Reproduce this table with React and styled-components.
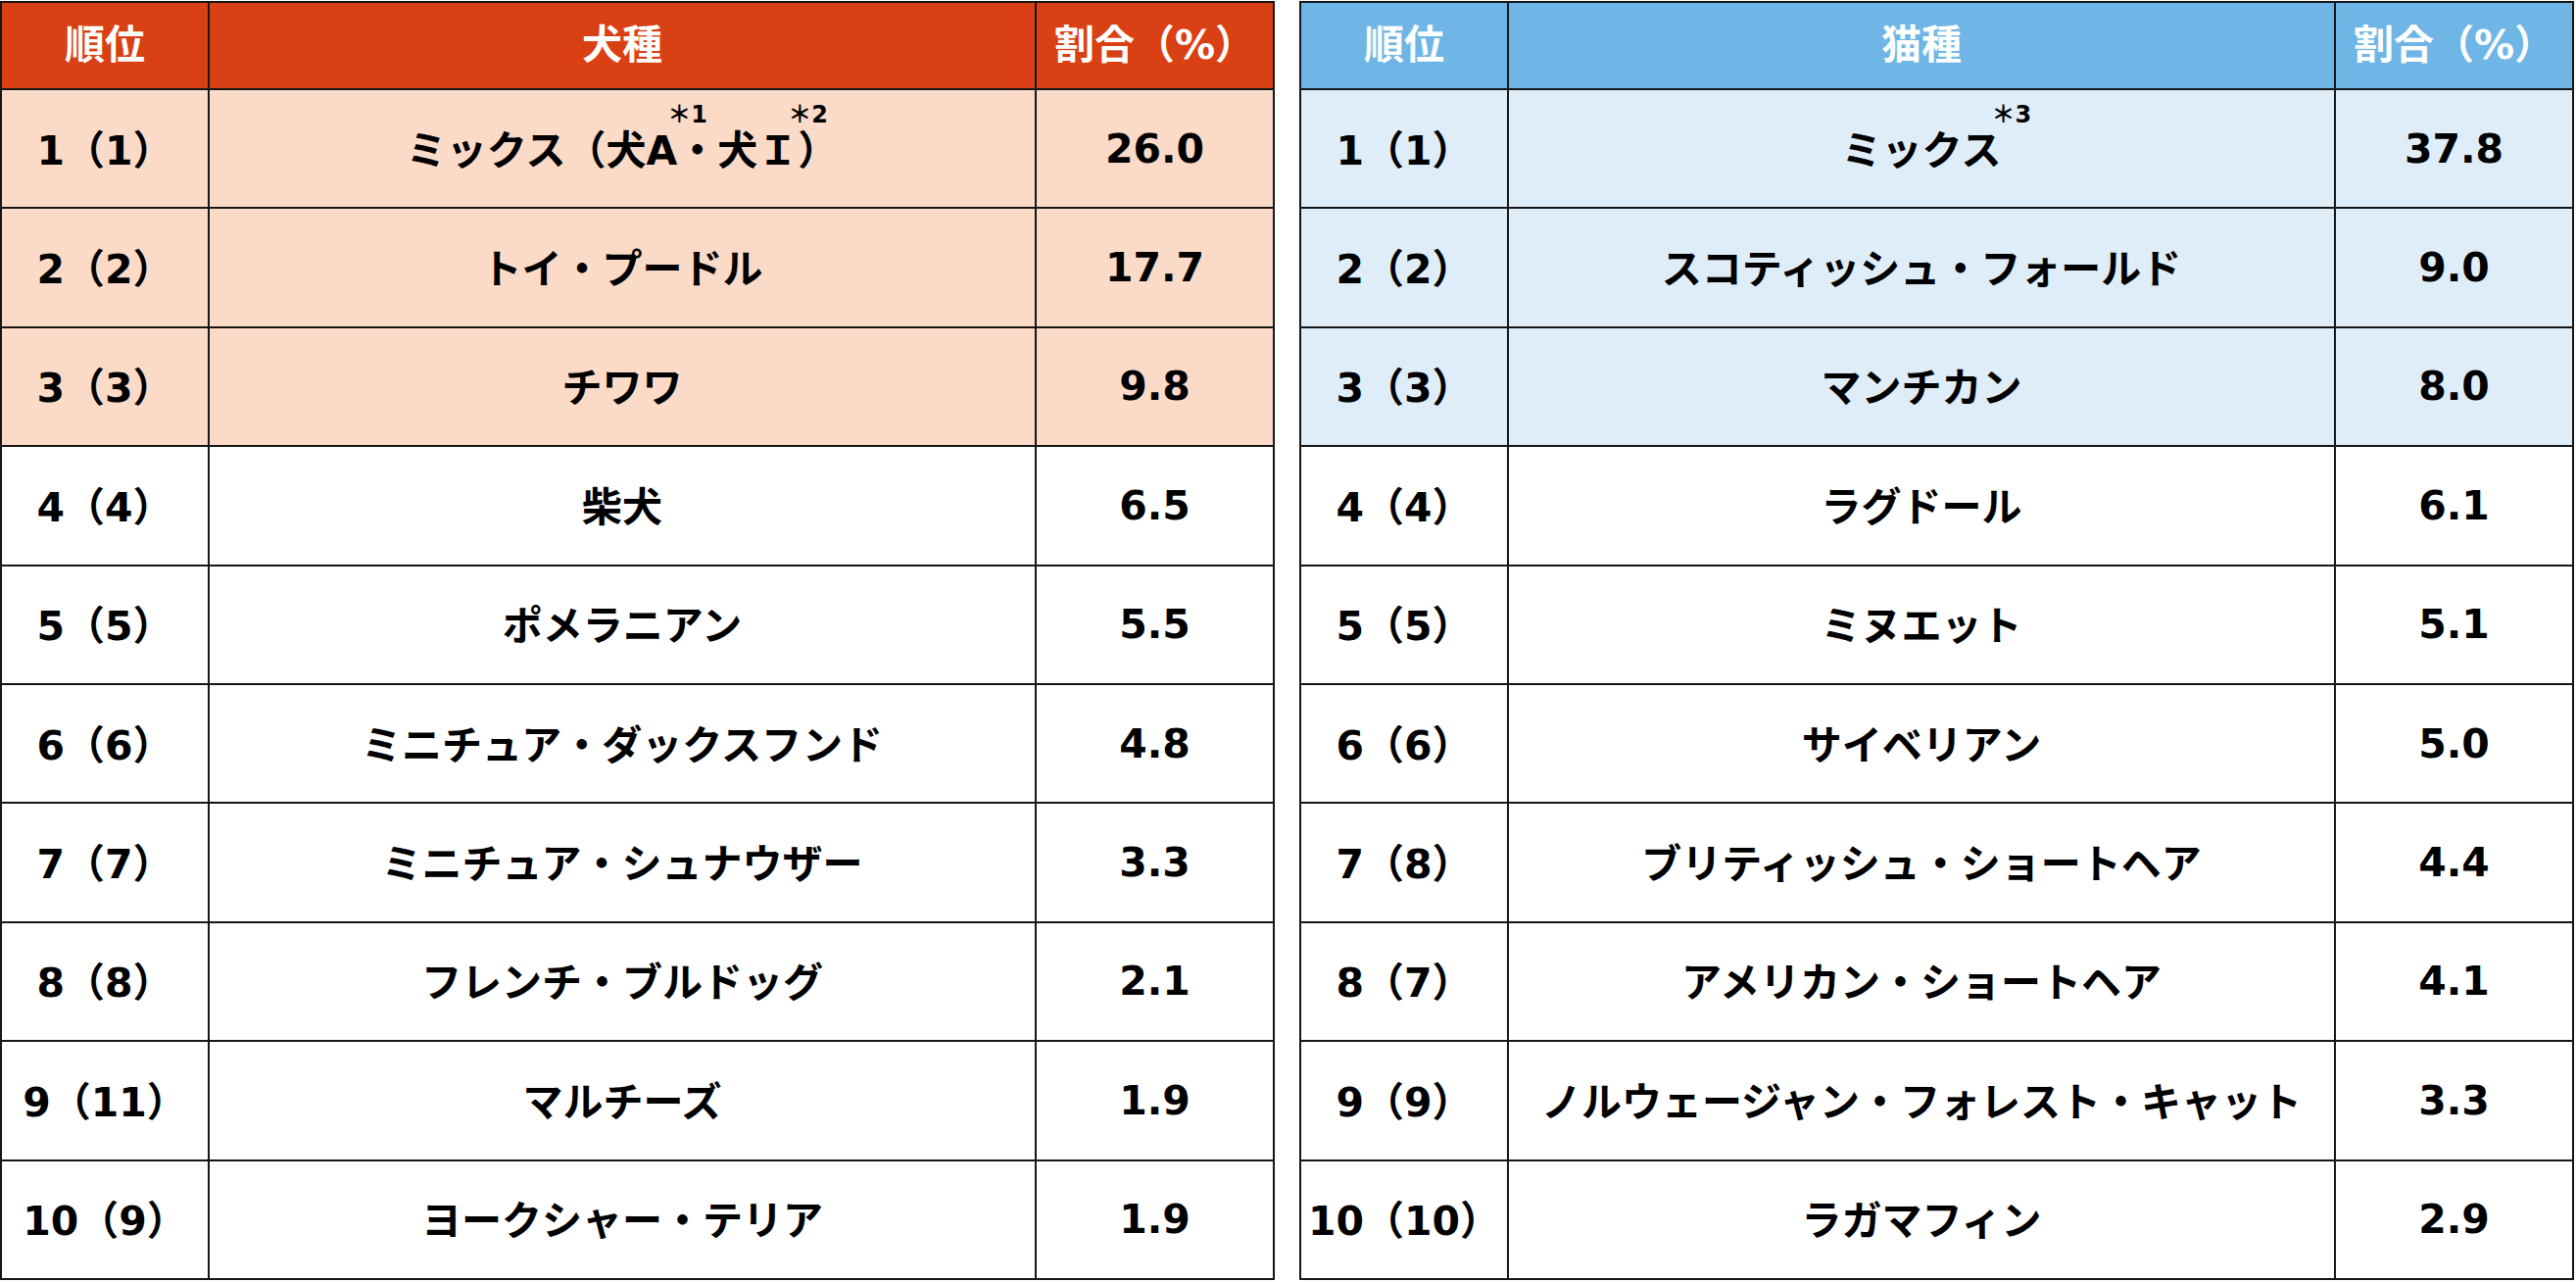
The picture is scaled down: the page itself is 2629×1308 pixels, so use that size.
import styled, { createGlobalStyle } from 'styled-components';

const GlobalStyle = createGlobalStyle`
  html, body {
    margin: 0;
    padding: 0;
    background: #fff;
  }
  body {
    font-family: "DejaVu Sans", "Noto Sans CJK JP", sans-serif;
  }
`;

const themes = {
  dog: { head: '#d94013', tint: '#fbdbc8' },
  cat: { head: '#6fb6e6', tint: '#dfedf9' },
};

const Page = styled.div`
  display: flex;
  gap: 25px;
  padding-top: 1px;
  width: 2629px;
  height: 1308px;
  box-sizing: border-box;
`;

const Table = styled.div`
  display: grid;
  grid-template-columns: 210px 1fr 241px;
  grid-template-rows: 87px repeat(10, 1fr);
  gap: 2px;
  padding: 2px;
  width: 1301px;
  height: 1305px;
  box-sizing: border-box;
  background: #161616;
`;

const HeadCell = styled.div`
  display: flex;
  align-items: center;
  justify-content: center;
  padding-bottom: 10px;
  background: ${(p) => p.$bg};
  color: #fff;
  font-size: 41px;
  font-weight: 700;
  white-space: nowrap;
`;

const Cell = styled.div`
  display: flex;
  align-items: center;
  justify-content: center;
  padding-bottom: ${(p) => (p.$num ? '0' : '4px')};
  background: ${(p) => p.$bg};
  color: #000;
  font-size: 41px;
  font-weight: 700;
  white-space: nowrap;
`;

const Note = styled.span`
  display: inline-block;
  width: 0;
  position: relative;
  left: -10px;
  top: -33px;
  font-size: 24px;
  line-height: 0;
  white-space: nowrap;
`;

const dogs = [
  ['1（1）', <>ミックス（犬A<Note>＊1</Note>・犬Ｉ<Note>＊2</Note>）</>, '26.0'],
  ['2（2）', 'トイ・プードル', '17.7'],
  ['3（3）', 'チワワ', '9.8'],
  ['4（4）', '柴犬', '6.5'],
  ['5（5）', 'ポメラニアン', '5.5'],
  ['6（6）', 'ミニチュア・ダックスフンド', '4.8'],
  ['7（7）', 'ミニチュア・シュナウザー', '3.3'],
  ['8（8）', 'フレンチ・ブルドッグ', '2.1'],
  ['9（11）', 'マルチーズ', '1.9'],
  ['10（9）', 'ヨークシャー・テリア', '1.9'],
];

const cats = [
  ['1（1）', <>ミックス<Note>＊3</Note></>, '37.8'],
  ['2（2）', 'スコティッシュ・フォールド', '9.0'],
  ['3（3）', 'マンチカン', '8.0'],
  ['4（4）', 'ラグドール', '6.1'],
  ['5（5）', 'ミヌエット', '5.1'],
  ['6（6）', 'サイベリアン', '5.0'],
  ['7（8）', 'ブリティッシュ・ショートヘア', '4.4'],
  ['8（7）', 'アメリカン・ショートヘア', '4.1'],
  ['9（9）', 'ノルウェージャン・フォレスト・キャット', '3.3'],
  ['10（10）', 'ラガマフィン', '2.9'],
];

function Ranking({ title, rows, theme }) {
  return (
    <Table>
      <HeadCell $bg={theme.head}>順位</HeadCell>
      <HeadCell $bg={theme.head}>{title}</HeadCell>
      <HeadCell $bg={theme.head}>割合（%）</HeadCell>
      {rows.map(([rank, name, share], i) => {
        const bg = i < 3 ? theme.tint : '#fff';
        return [
          <Cell key={`r${i}`} $bg={bg}>{rank}</Cell>,
          <Cell key={`n${i}`} $bg={bg}>{name}</Cell>,
          <Cell key={`s${i}`} $bg={bg} $num>{share}</Cell>,
        ];
      })}
    </Table>
  );
}

export default function App() {
  return (
    <>
      <GlobalStyle />
      <Page>
        <Ranking title="犬種" rows={dogs} theme={themes.dog} />
        <Ranking title="猫種" rows={cats} theme={themes.cat} />
      </Page>
    </>
  );
}
